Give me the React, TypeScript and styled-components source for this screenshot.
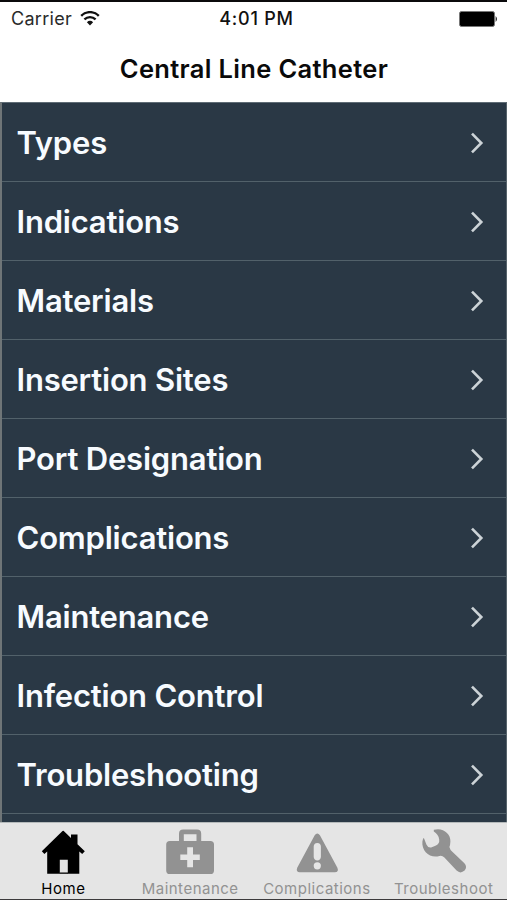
import React from "react";
import styled, { createGlobalStyle } from "styled-components";

const GlobalStyle = createGlobalStyle`
  * { box-sizing: border-box; }
  body {
    margin: 0;
    background: #fff;
    font-family: Inter, "Liberation Sans", sans-serif;
  }
`;

const Screen = styled.div`
  width: 507px;
  height: 900px;
  display: flex;
  flex-direction: column;
  overflow: hidden;
  border-top: 2px solid #0b0a0c;
  border-bottom: 1px solid #3c3a3c;
  background: #fff;
`;

const StatusBar = styled.div`
  height: 33px;
  flex: none;
  display: grid;
  grid-template-columns: 1fr auto 1fr;
  align-items: center;
  padding: 0 9px 0 11px;
  font-size: 18px;
  color: #2a2a2a;
`;

const Carrier = styled.div`
  display: flex;
  align-items: center;
  gap: 8px;
  letter-spacing: 0.3px;
`;

const Clock = styled.div`
  font-weight: 500;
  color: #111;
  letter-spacing: 0.75px;
  padding-left: 4px;
`;

const Battery = styled.svg`
  justify-self: end;
`;

const TitleBar = styled.h1`
  margin: 0;
  height: 67px;
  flex: none;
  display: flex;
  align-items: center;
  justify-content: center;
  font-size: 25.5px;
  font-weight: 600;
  letter-spacing: 0.33px;
  padding: 0 0 1px 1px;
  color: #0a0a0a;
`;

const List = styled.div`
  flex: 1;
  min-height: 0;
  overflow: hidden;
  border-left: 2px solid #6f7577;
  border-right: 1px solid #56636b;
  border-top: 1px solid #5f6c75;
  background: #2a3845;
`;

const Row = styled.div`
  height: 79px;
  display: flex;
  align-items: center;
  justify-content: space-between;
  padding: 2px 22px 0 14.5px;
  border-bottom: 1px solid #52616a;
`;

const RowLabel = styled.span`
  font-size: 31px;
  line-height: 40px;
  font-weight: 600;
  color: #f7fbff;
  white-space: nowrap;
  letter-spacing: -0.2px;
`;

const TabBar = styled.div`
  height: 77px;
  flex: none;
  display: grid;
  grid-template-columns: repeat(4, 1fr);
  border-top: 1px solid #b5babb;
  background: #e5e5e5;
`;

const Tab = styled.div<{ $active?: boolean }>`
  display: flex;
  flex-direction: column;
  align-items: center;
  color: ${(p) => (p.$active ? "#000" : "#929292")};
`;

const TabIcon = styled.svg`
  flex: none;
  width: 50px;
  height: 56px;
`;

const TabLabel = styled.span`
  font-size: 15px;
  line-height: 20px;
  white-space: nowrap;
  letter-spacing: 0.5px;
`;

const rows = [
  "Types",
  "Indications",
  "Materials",
  "Insertion Sites",
  "Port Designation",
  "Complications",
  "Maintenance",
  "Infection Control",
  "Troubleshooting",
];

const Chevron = () => (
  <svg width="14" height="22" viewBox="0 0 14 22" fill="none">
    <path d="M2 1.6 L11.3 11 L2 20.4" stroke="#ccd3d7" strokeWidth="2.6" />
  </svg>
);

const Wifi = () => (
  <svg width="20" height="16" viewBox="0 0 20 16" fill="none">
    <path d="M1.2 4.8 C6.2 -0.1 13.8 -0.1 18.8 4.8" stroke="#111" strokeWidth="2.4" />
    <path d="M4.4 8.4 C7.6 5.3 12.4 5.3 15.6 8.4" stroke="#111" strokeWidth="2.3" />
    <path d="M10 14.4 L6.9 11.2 C8.7 9.4 11.3 9.4 13.1 11.2 Z" fill="#111" />
  </svg>
);

const HomeIcon = () => (
  <TabIcon viewBox="0 0 50 56" fill="currentColor">
    <path d="M25.5 7.8 L33 15 V11.5 H39.5 V21.2 L46.8 28.2 L44.2 31 L41.3 28.6 V50.8 H29.8 V36.8 H21.8 V50.8 H9.2 V28.6 L6.4 31 L3.8 28.2 L23.5 9 Q24.5 7.8 25.5 7.8 Z" />
    <path d="M21.5 49.5 H30 V50.8 H21.5 Z" />
  </TabIcon>
);

const KitIcon = () => (
  <TabIcon viewBox="0 0 50 56" fill="currentColor">
    <path
      fillRule="evenodd"
      d="M14 18 V10.8 Q14 6.6 18.2 6.6 H32 Q36.2 6.6 36.2 10.8 V18 H45.4 Q49 18 49 21.6 V47.4 Q49 51 45.4 51 H4.8 Q1.2 51 1.2 47.4 V21.6 Q1.2 18 4.8 18 Z M18.8 18 H31.5 V11.3 H18.8 Z M22.2 24.2 V31.4 H15.3 V37 H22.2 V44.2 H28 V37 H34.8 V31.4 H28 V24.2 Z"
    />
  </TabIcon>
);

const WarningIcon = () => (
  <TabIcon viewBox="0 0 50 56" fill="currentColor">
    <path
      fillRule="evenodd"
      d="M22.7 12.3 Q25.3 8.8 27.9 12.3 L45.4 44.8 Q47.2 49.2 42.8 49.2 H7.8 Q3.6 49.2 5.2 44.8 Z M25.3 20 Q21.7 20 21.7 23.8 V34 Q22.2 37.4 25.3 37.4 Q28.4 37.4 28.9 34 V23.8 Q28.9 20 25.3 20 Z M25.3 39.2 A3.6 3.6 0 1 0 25.3 46.4 A3.6 3.6 0 1 0 25.3 39.2 Z"
    />
  </TabIcon>
);

const WrenchIcon = () => (
  <TabIcon viewBox="0 0 50 56" fill="currentColor">
    <path d="M14.8 6.8 C23.4 4 32 10.4 31.4 18.5 Q31.3 21.8 30.4 24 Q31 27 33.6 29 L45.4 40.2 Q48.6 43.8 45.6 47.6 Q41.4 51.2 37.6 47.6 L25.4 34.6 Q23 32.2 20.4 33 C10.9 35.6 2.4 28 3.4 18.4 Q3.8 15.8 4.8 14.8 L7.4 21.4 Q9 25.2 12.8 24.2 L16.4 22.7 Q20.8 20.8 20.2 16.4 Q19.2 11 14.8 8.6 Z" />
  </TabIcon>
);

const tabs = [
  { label: "Home", Icon: HomeIcon, active: true },
  { label: "Maintenance", Icon: KitIcon },
  { label: "Complications", Icon: WarningIcon },
  { label: "Troubleshoot", Icon: WrenchIcon },
];

export default function App() {
  return (
    <>
      <GlobalStyle />
      <Screen>
        <StatusBar>
          <Carrier>
            Carrier
            <Wifi />
          </Carrier>
          <Clock>4:01 PM</Clock>
          <Battery width="39" height="16" viewBox="0 0 39 16">
            <rect x="0.5" y="0.5" width="35" height="15" rx="2" fill="#000" stroke="#777" />
            <path d="M36.6 5 Q39.4 8 36.6 11 Z" fill="#222" />
          </Battery>
        </StatusBar>
        <TitleBar>Central Line Catheter</TitleBar>
        <List>
          {rows.map((label) => (
            <Row key={label}>
              <RowLabel>{label}</RowLabel>
              <Chevron />
            </Row>
          ))}
        </List>
        <TabBar>
          {tabs.map(({ label, Icon, active }) => (
            <Tab key={label} $active={active}>
              <Icon />
              <TabLabel>{label}</TabLabel>
            </Tab>
          ))}
        </TabBar>
      </Screen>
    </>
  );
}
